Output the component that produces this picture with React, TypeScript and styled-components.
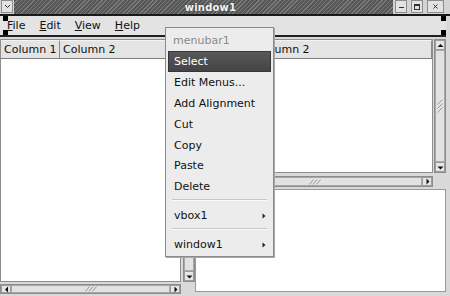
import React from "react";
import styled, { createGlobalStyle } from "styled-components";

const Global = createGlobalStyle`
  *, *::before, *::after { box-sizing: border-box; }
  html, body { margin: 0; padding: 0; background: #d9d9d9; overflow: hidden; }
  body { font-family: "DejaVu Sans", "Liberation Sans", sans-serif; font-size: 11px; color: #111; }
`;

const Window = styled.div`
  position: relative;
  width: 450px;
  height: 296px;
  background: #d9d9d9;
  display: flex;
  flex-direction: column;
  overflow: hidden;
`;

const TitleBar = styled.div`
  height: 16px;
  display: flex;
  border-bottom: 2px solid #1a1a1a;
  background: #d4d4d4;
`;

const TitleButton = styled.div<{ $w?: number }>`
  width: ${(p) => p.$w ?? 12}px;
  height: 13px;
  background: #e2e2e2;
  border: 1px solid #8c8c8c;
  display: flex;
  align-items: center;
  justify-content: center;
`;

const LeftButtons = styled.div`
  width: 14px;
  padding-left: 1px;
`;

const Stripes = styled.div`
  flex: 1;
  padding-left: 14px;
  display: flex;
  align-items: center;
  justify-content: center;
  background: repeating-linear-gradient(135deg, #575757 0 2px, #7a7a7a 2px 3px);
  color: #f4f4f4;
  font-weight: bold;
  font-size: 10px;
  letter-spacing: 0.2px;
  text-shadow: 0 0 2px #333;
`;

const RightButtons = styled.div`
  width: 57px;
  display: flex;
  gap: 4px;
  padding-left: 2px;
`;

const MenuBar = styled.div`
  position: relative;
  height: 21px;
  margin-right: 4px;
  background: #e3e3e3;
  border-bottom: 2px solid #202020;
  display: flex;
  align-items: center;
`;

const Handle = styled.div<{ $top?: boolean; $right?: boolean }>`
  position: absolute;
  width: 5px;
  height: 5px;
  background: #000;
  ${(p) => (p.$top ? "top: 0;" : "bottom: 0;")}
  ${(p) => (p.$right ? "right: 0;" : "left: 3px;")}
`;

const BarItem = styled.div`
  padding: 0 7px;
  line-height: 19px;
  color: #111;
  u { text-decoration: underline; text-underline-offset: 1px; }
`;

const Main = styled.div`
  flex: 1;
  margin-top: 2px;
  display: flex;
`;

const LeftPane = styled.div`
  width: 195px;
  display: grid;
  grid-template-columns: 181px 12px;
  grid-template-rows: 243px 10px;
  column-gap: 2px;
  row-gap: 2px;
`;

const RightPane = styled.div`
  width: 251px;
  display: flex;
  flex-direction: column;
`;

const TopScrolled = styled.div`
  margin-left: 2px;
  display: grid;
  grid-template-columns: 236px 12px;
  grid-template-rows: 134px 11px;
  column-gap: 1px;
  row-gap: 3px;
`;

const Tree = styled.div`
  background: #fff;
  border: 1px solid #8e8e8e;
  display: flex;
  flex-direction: column;
  overflow: hidden;
`;

const Header = styled.div`
  height: 19px;
  display: flex;
  background: #e4e4e4;
  border-bottom: 1px solid #7e7e7e;
`;

const HeaderCell = styled.div<{ $w?: number }>`
  ${(p) => (p.$w ? `width: ${p.$w}px;` : "flex: 1;")}
  padding-left: 3px;
  line-height: 18px;
  border-right: 1px solid #8a8a8a;
  border-top: 1px solid #f4f4f4;
  white-space: nowrap;
  color: #111;
`;

const TextView = styled.div`
  margin-top: 2px;
  height: 103px;
  background: #fff;
  border: 1px solid #9a9a9a;
`;

const Scrollbar = styled.div<{ $vertical?: boolean }>`
  display: flex;
  flex-direction: ${(p) => (p.$vertical ? "column" : "row")};
  background: #cfcfcf;
  border: 1px solid #8c8c8c;
`;

const ArrowBtn = styled.div<{ $vertical?: boolean }>`
  ${(p) => (p.$vertical ? "height: 10px;" : "width: 10px;")}
  flex: none;
  background: #e6e6e6;
  border: 1px solid #9c9c9c;
  display: flex;
  align-items: center;
  justify-content: center;
`;

const Thumb = styled.div`
  flex: 1;
  background: #e2e2e2;
  border: 1px solid #a8a8a8;
  display: flex;
  align-items: center;
  justify-content: center;
`;

const Menu = styled.div`
  position: absolute;
  left: 165px;
  top: 27px;
  width: 109px;
  height: 230px;
  background: #ececec;
  border: 1px solid #8a8a8a;
  box-shadow: 1px 1px 0 #a8a8a8;
  padding: 2px 0 1px;
  display: flex;
  flex-direction: column;
`;

const MenuTitle = styled.div`
  height: 21px;
  line-height: 21px;
  padding-left: 7px;
  color: #8a8a8a;
`;

const MenuItem = styled.div<{ $active?: boolean }>`
  height: 21px;
  margin: 0 2px;
  padding: 0 4px 0 5px;
  display: flex;
  align-items: center;
  justify-content: space-between;
  color: ${(p) => (p.$active ? "#fff" : "#111")};
  background: ${(p) => (p.$active ? "linear-gradient(#585858, #444)" : "transparent")};
  border: ${(p) => (p.$active ? "1px solid #363636" : "1px solid transparent")};
`;

const Separator = styled.div`
  height: 8px;
  padding: 2px 6px 0;
  &::after {
    content: "";
    display: block;
    border-top: 1px solid #c6c6c6;
    border-bottom: 1px solid #fbfbfb;
  }
`;

type Dir = "up" | "down" | "left" | "right";
const Arrow = ({ dir }: { dir: Dir }) => {
  const pts: Record<Dir, string> = {
    up: "0.5,4 3.5,1 6.5,4",
    down: "0.5,1.5 3.5,4.5 6.5,1.5",
    left: "4,0.5 1,3.5 4,6.5",
    right: "1.5,0.5 4.5,3.5 1.5,6.5",
  };
  const w = dir === "up" || dir === "down" ? 7 : 5;
  const h = dir === "up" || dir === "down" ? 5 : 7;
  return (
    <svg width={w} height={h} viewBox={`0 0 ${w} ${h}`}>
      <polygon points={pts[dir]} fill="#111" />
    </svg>
  );
};

const Grip = ({ vertical }: { vertical?: boolean }) => (
  <svg width={vertical ? 6 : 12} height={vertical ? 14 : 6} viewBox={vertical ? "0 0 6 14" : "0 0 12 6"}>
    {vertical
      ? [0, 4, 8].map((o) => <line key={o} x1="0.5" y1={o + 5.5} x2="5.5" y2={o + 0.5} stroke="#9a9a9a" strokeWidth="1" />)
      : [0, 3.5, 7].map((o) => <line key={o} x1={o + 0.5} y1="5.5" x2={o + 4.5} y2="0.5" stroke="#9a9a9a" strokeWidth="1" />)}
  </svg>
);

const HScroll = () => (
  <Scrollbar>
    <ArrowBtn>
      <Arrow dir="left" />
    </ArrowBtn>
    <Thumb>
      <Grip />
    </Thumb>
    <ArrowBtn>
      <Arrow dir="right" />
    </ArrowBtn>
  </Scrollbar>
);

const VScroll = () => (
  <Scrollbar $vertical>
    <ArrowBtn $vertical>
      <Arrow dir="up" />
    </ArrowBtn>
    <Thumb>
      <Grip vertical />
    </Thumb>
    <ArrowBtn $vertical>
      <Arrow dir="down" />
    </ArrowBtn>
  </Scrollbar>
);

const SubArrow = () => (
  <svg width="4" height="6" viewBox="0 0 4 6">
    <polygon points="0.5,0.5 3.5,3 0.5,5.5" fill="#222" />
  </svg>
);

const TreeView = ({ first }: { first: number }) => (
  <Tree>
    <Header>
      <HeaderCell $w={first}>Column 1</HeaderCell>
      <HeaderCell>Column 2</HeaderCell>
    </Header>
  </Tree>
);

export default function App() {
  return (
    <>
      <Global />
      <Window>
        <TitleBar>
          <LeftButtons>
            <TitleButton>
              <svg width="7" height="5" viewBox="0 0 7 5">
                <polyline points="1,1 3.5,3.5 6,1" fill="none" stroke="#333" strokeWidth="1" />
              </svg>
            </TitleButton>
          </LeftButtons>
          <Stripes>window1</Stripes>
          <RightButtons>
            <TitleButton>
              <svg width="5" height="5" viewBox="0 0 5 5">
                <line x1="0" y1="3.5" x2="5" y2="3.5" stroke="#333" strokeWidth="1" />
              </svg>
            </TitleButton>
            <TitleButton>
              <svg width="6" height="6" viewBox="0 0 6 6">
                <rect x="0.5" y="0.5" width="5" height="5" fill="none" stroke="#333" strokeWidth="1" />
                <line x1="0.5" y1="1.5" x2="5.5" y2="1.5" stroke="#333" strokeWidth="1" />
              </svg>
            </TitleButton>
            <TitleButton $w={17}>
              <svg width="5" height="5" viewBox="0 0 5 5">
                <path d="M0.5 0.5 L4.5 4.5 M4.5 0.5 L0.5 4.5" stroke="#333" strokeWidth="1" />
              </svg>
            </TitleButton>
          </RightButtons>
        </TitleBar>

        <MenuBar>
          <BarItem>
            <u>F</u>ile
          </BarItem>
          <BarItem>
            <u>E</u>dit
          </BarItem>
          <BarItem>
            <u>V</u>iew
          </BarItem>
          <BarItem>
            <u>H</u>elp
          </BarItem>
          <Handle $top />
          <Handle />
          <Handle $top $right />
          <Handle $right />
        </MenuBar>

        <Main>
          <LeftPane>
            <TreeView first={59} />
            <VScroll />
            <HScroll />
          </LeftPane>
          <RightPane>
            <TopScrolled>
              <TreeView first={56} />
              <VScroll />
              <HScroll />
            </TopScrolled>
            <TextView />
          </RightPane>
        </Main>

        <Menu>
          <MenuTitle>menubar1</MenuTitle>
          <MenuItem $active>Select</MenuItem>
          <MenuItem>Edit Menus...</MenuItem>
          <MenuItem>Add Alignment</MenuItem>
          <MenuItem>Cut</MenuItem>
          <MenuItem>Copy</MenuItem>
          <MenuItem>Paste</MenuItem>
          <MenuItem>Delete</MenuItem>
          <Separator />
          <MenuItem>
            vbox1
            <SubArrow />
          </MenuItem>
          <Separator />
          <MenuItem>
            window1
            <SubArrow />
          </MenuItem>
        </Menu>
      </Window>
    </>
  );
}
